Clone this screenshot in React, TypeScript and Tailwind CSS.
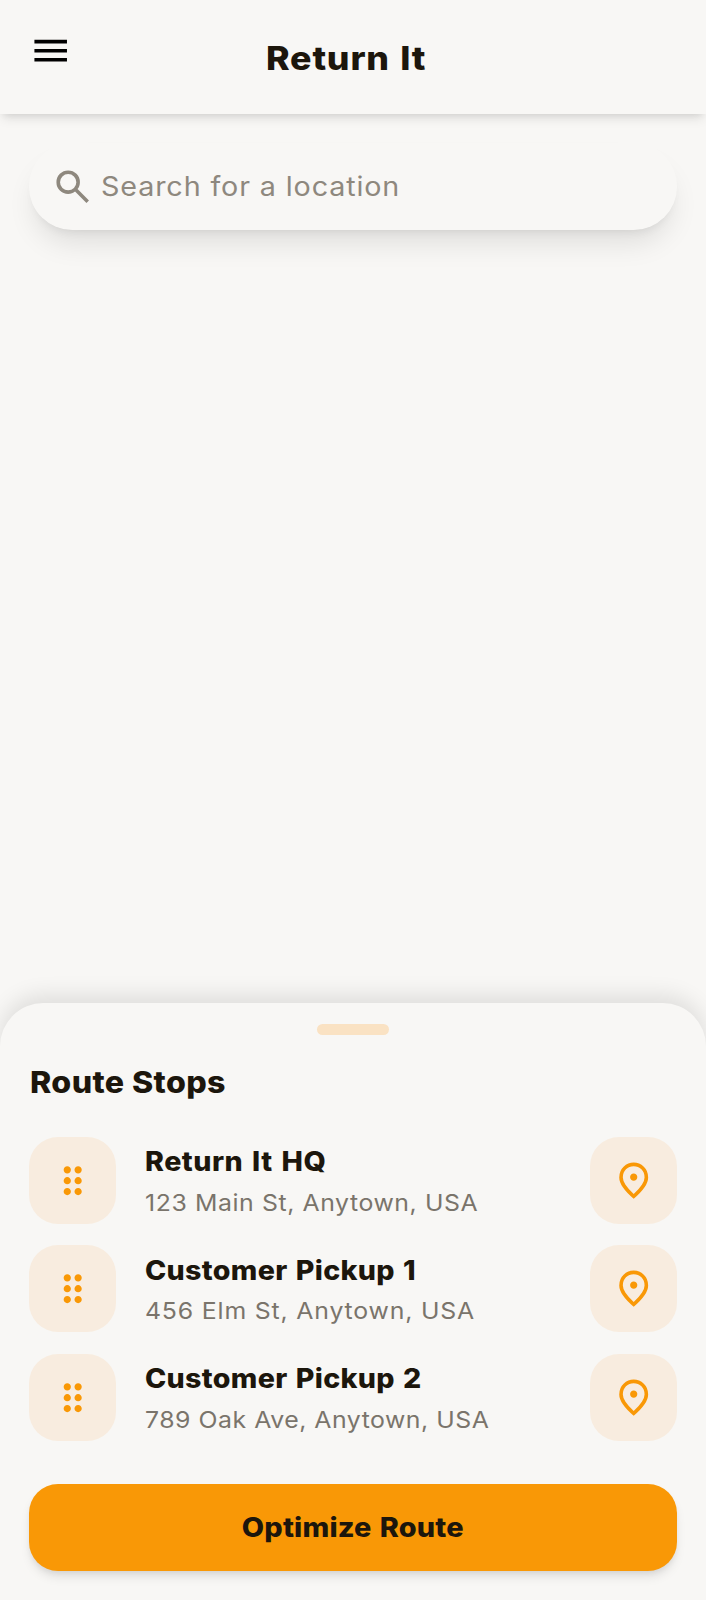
import React from "react";

type IconProps = { d: string; className?: string };

const MENU = "M120-240v-80h720v80H120Zm0-200v-80h720v80H120Zm0-200v-80h720v80H120Z";
const SEARCH =
  "M784-120 532-372q-30 24-69 38t-83 14q-109 0-184.5-75.5T120-580q0-109 75.5-184.5T380-840q109 0 184.5 75.5T640-580q0 44-14 83t-38 69l252 252-56 56ZM380-400q75 0 127.5-52.5T560-580q0-75-52.5-127.5T380-760q-75 0-127.5 52.5T200-580q0 75 52.5 127.5T380-400Z";
const DRAG =
  "M360-160q-33 0-56.5-23.5T280-240q0-33 23.5-56.5T360-320q33 0 56.5 23.5T440-240q0 33-23.5 56.5T360-160Zm240 0q-33 0-56.5-23.5T520-240q0-33 23.5-56.5T600-320q33 0 56.5 23.5T680-240q0 33-23.5 56.5T600-160ZM360-400q-33 0-56.5-23.5T280-480q0-33 23.5-56.5T360-560q33 0 56.5 23.5T440-480q0 33-23.5 56.5T360-400Zm240 0q-33 0-56.5-23.5T520-480q0-33 23.5-56.5T600-560q33 0 56.5 23.5T680-480q0 33-23.5 56.5T600-400ZM360-640q-33 0-56.5-23.5T280-720q0-33 23.5-56.5T360-800q33 0 56.5 23.5T440-720q0 33-23.5 56.5T360-640Zm240 0q-33 0-56.5-23.5T520-720q0-33 23.5-56.5T600-800q33 0 56.5 23.5T680-720q0 33-23.5 56.5T600-640Z";
const PIN =
  "M480-480q33 0 56.5-23.5T560-560q0-33-23.5-56.5T480-640q-33 0-56.5 23.5T400-560q0 33 23.5 56.5T480-480Zm0 294q122-112 181-203.5T720-552q0-109-69.5-178.5T480-800q-101 0-170.5 69.5T240-552q0 71 59 162.5T480-186Zm0 106Q319-217 239.5-334.5T160-552q0-150 96.5-239T480-880q127 0 223.5 89T800-552q0 100-79.5 217.5T480-80Z";

function Icon({ d, className = "" }: IconProps) {
  return (
    <svg viewBox="0 -960 960 960" fill="currentColor" className={`size-[43.4px] shrink-0 ${className}`}>
      <path d={d} />
    </svg>
  );
}

function Tile({ d }: { d: string }) {
  return (
    <div className="flex size-[86.9px] shrink-0 items-center justify-center rounded-[29px] bg-[#f8ecdf] text-[#f99806]">
      <Icon d={d} />
    </div>
  );
}

const stops = [
  { name: "Return It HQ", address: "123 Main St, Anytown, USA", nameClass: "tracking-[0.45px] [word-spacing:2px]", addressClass: "tracking-[0.54px]" },
  { name: "Customer Pickup 1", address: "456 Elm St, Anytown, USA", nameClass: "tracking-[0.3px] [word-spacing:1.5px]", addressClass: "tracking-[0.76px]" },
  { name: "Customer Pickup 2", address: "789 Oak Ave, Anytown, USA", nameClass: "tracking-[0.3px] [word-spacing:1.5px]", addressClass: "tracking-[0.48px]" },
];

export default function App() {
  return (
    <div className="flex h-[1600px] w-full flex-col overflow-hidden bg-[#f8f7f5] font-['Inter','Liberation_Sans',sans-serif] text-[#1c160c]">
      <header className="flex h-[114px] shrink-0 items-start pt-[29px] pr-[85.4px] pl-[29px] shadow-[0_7.2px_10.9px_-1.8px_rgba(0,0,0,0.1),0_3.6px_7.2px_-3.6px_rgba(0,0,0,0.1)]">
        <Icon d={MENU} className="text-black" />
        <h1 className="flex-1 scale-x-[1.09] text-center text-[32.8px] leading-[59px] font-extrabold tracking-[0.75px] [word-spacing:1.5px]">
          Return It
        </h1>
      </header>

      <main className="flex flex-1 flex-col px-[29px] pt-[29px]">
        <label className="flex h-[87px] items-center rounded-full pl-[21.7px] text-[#8e887e] shadow-[0_18.1px_27.2px_-5.4px_rgba(0,0,0,0.1),0_7.2px_10.9px_-7.2px_rgba(0,0,0,0.1)]">
          <Icon d={SEARCH} />
          <span className="ml-[6.5px] origin-left scale-x-[1.08] pb-px text-[26.6px] leading-[43px] tracking-[0.8px]">
            Search for a location
          </span>
        </label>
      </main>

      <section className="flex h-[597px] shrink-0 flex-col rounded-t-[43.5px] px-[29px] pt-[21.4px] shadow-[0_-7.2px_21.7px_0_rgba(0,0,0,0.1)]">
        <div className="h-[10.9px] w-[72.8px] shrink-0 self-center rounded-full bg-[#fae2c3]" />
        <h2 className="mt-[25px] ml-[0.8px] origin-left scale-x-[1.08] text-[29.8px] leading-[45px] font-extrabold tracking-[0.35px]">
          Route Stops
        </h2>
        <ul className="mt-[31.6px] flex flex-col gap-[21.7px]">
          {stops.map((stop) => (
            <li key={stop.name} className="flex items-center">
              <Tile d={DRAG} />
              <div className="ml-[29px] flex-1 origin-left scale-x-[1.08] pt-px whitespace-nowrap">
                <p className={`text-[26.5px] leading-[43.4px] font-extrabold ${stop.nameClass}`}>{stop.name}</p>
                <p className={`text-[23px] leading-[38px] text-[#7a746b] ${stop.addressClass}`}>{stop.address}</p>
              </div>
              <Tile d={PIN} />
            </li>
          ))}
        </ul>
        <button className="mt-[43.1px] h-[87px] shrink-0 rounded-[29px] bg-[#f99806] text-[26.5px] font-extrabold tracking-[0.15px] shadow-[0_7.2px_10.9px_-1.8px_rgba(0,0,0,0.1),0_3.6px_7.2px_-3.6px_rgba(0,0,0,0.1)]">
          <span className="inline-block scale-x-[1.09] [word-spacing:1.5px]">Optimize Route</span>
        </button>
      </section>
    </div>
  );
}
